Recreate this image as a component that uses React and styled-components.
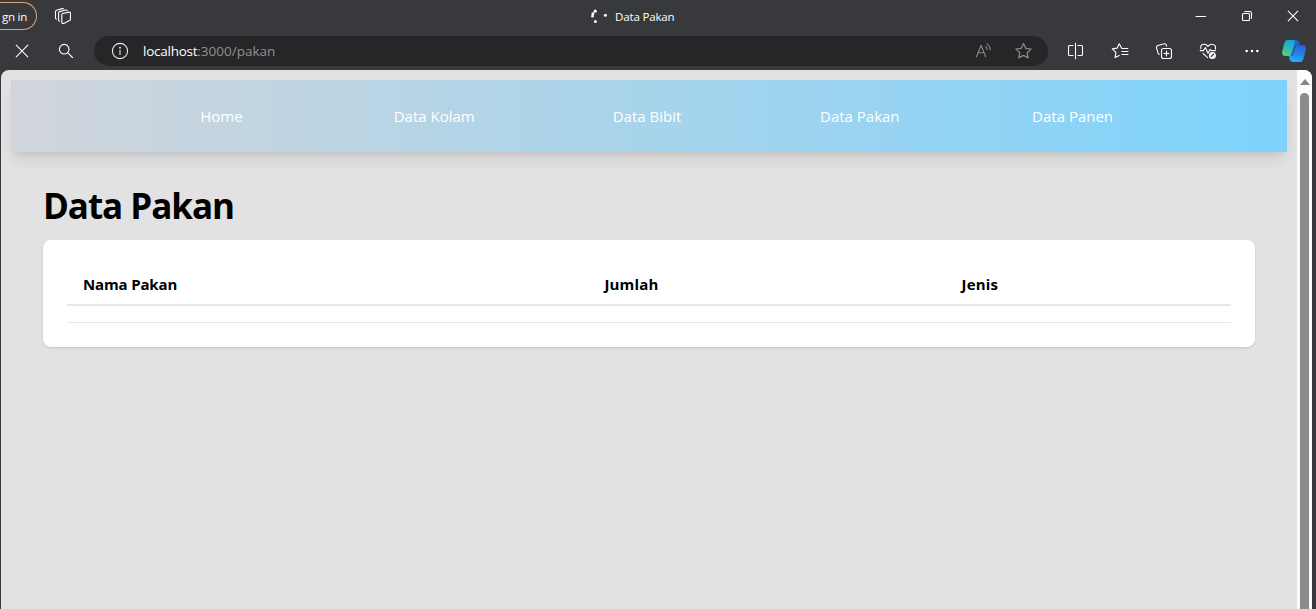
import React from 'react';
import styled, { createGlobalStyle } from 'styled-components';

const GlobalStyle = createGlobalStyle`
  * { box-sizing: border-box; }
  body { margin: 0; overflow: hidden; background: #38393d; font-family: "Open Sans", "Noto Sans", sans-serif; }
`;

const Window = styled.div`
  width: 1316px;
  height: 609px;
  overflow: hidden;
  display: flex;
  flex-direction: column;
  background: #38393d;
  color: #fff;
`;

const TitleBar = styled.header`
  height: 32px;
  display: grid;
  grid-template-columns: 590px 1fr 138px;
  align-items: center;
`;

const TitleLeft = styled.div`
  display: flex;
  align-items: center;
  gap: 17px;
`;

const SignIn = styled.div`
  width: 37px;
  height: 28px;
  padding-right: 9px;
  display: flex;
  align-items: center;
  justify-content: flex-end;
  border: 1px solid #e0a67c;
  border-left: 0;
  border-radius: 0 14px 14px 0;
  font-size: 11.5px;
  letter-spacing: -0.25px;
  white-space: nowrap;
`;

const TabTitle = styled.div`
  display: flex;
  align-items: center;
  gap: 7px;
  height: 32px;
  padding-top: 1px;
  font-size: 11.5px;
  line-height: 32px;
  letter-spacing: ${(p) => p.$tracking};
`;

const Controls = styled.div`
  display: grid;
  grid-template-columns: repeat(3, 46px);
  justify-items: center;
`;

const Toolbar = styled.div`
  height: 38px;
  display: flex;
  align-items: center;
`;

const IconCell = styled.div`
  width: ${(p) => p.$w || 44}px;
  height: 38px;
  display: flex;
  align-items: center;
  justify-content: center;
  flex: none;
`;

const AddressBar = styled.div`
  width: 954px;
  height: 30px;
  margin: 0 6px;
  padding: 0 4px 0 17px;
  display: flex;
  align-items: center;
  border-radius: 15px;
  background: #262629;
  color: #909092;
`;

const Url = styled.div`
  flex: 1;
  margin-left: 14px;
  font-size: 13.5px;
  line-height: 30px;
  letter-spacing: ${(p) => p.$tracking};
`;

const Host = styled.span`
  color: #fff;
  letter-spacing: -0.25px;
`;

const Viewport = styled.div`
  flex: 1;
  width: 1311px;
  margin-left: 1px;
  display: flex;
  overflow: hidden;
  border-radius: 8px 8px 0 0;
  background: #e2e2e2;
`;

const Page = styled.main`
  flex: 1;
  padding: 10px;
  color: #000;
`;

const Nav = styled.nav`
  height: 72px;
  padding: 0 108px 0 104px;
  display: grid;
  grid-template-columns: repeat(5, 1fr);
  align-items: center;
  justify-items: center;
  background: linear-gradient(90deg, #d1d5db, #7dd3fc);
  box-shadow: 0 10px 15px -3px rgba(0, 0, 0, 0.1), 0 4px 6px -4px rgba(0, 0, 0, 0.1);
`;

const NavLink = styled.a`
  color: #fff;
  font-size: 15px;
  line-height: 24px;
  letter-spacing: ${(p) => p.$tracking};
`;

const Section = styled.section`
  padding: 32px 32px 0;
`;

const Heading = styled.h1`
  margin: 0 0 12px;
  height: 44px;
  font-size: 35px;
  line-height: 44px;
  font-weight: 700;
  letter-spacing: ${(p) => p.$tracking};
`;

const Card = styled.div`
  height: 107px;
  padding: 24px;
  border-radius: 8px;
  background: #fff;
  box-shadow: 0 1px 3px rgba(0, 0, 0, 0.1), 0 1px 2px -1px rgba(0, 0, 0, 0.1);
`;

const Table = styled.table`
  width: 100%;
  table-layout: fixed;
  border-collapse: separate;
  border-spacing: 0;
`;

const HeadCell = styled.th`
  width: ${(p) => p.$w}px;
  height: 42px;
  padding: 0 16px;
  text-align: left;
  font-size: 15px;
  line-height: 24px;
  font-weight: 700;
  letter-spacing: ${(p) => p.$tracking};
  border-bottom: 2px solid #e5e7e9;
`;

const EmptyCell = styled.td`
  height: 17px;
  padding: 0;
  border-bottom: 1px solid #e8e8ea;
`;

const ScrollTrack = styled.div`
  width: 15px;
  padding-top: 9px;
  display: flex;
  flex-direction: column;
  align-items: center;
  gap: 8px;
  background: #fcfcfc;
`;

const ScrollArrow = styled.div`
  border: 5px solid transparent;
  border-top: 0;
  border-bottom: 6px solid #868686;
`;

const ScrollThumb = styled.div`
  width: 9px;
  flex: 1;
  border-radius: 5px 5px 0 0;
  background: #8b8b8b;
`;

const Svg = ({ w = 20, h = w, stroke = 'currentColor', sw = 1.1, children }) => (
  <svg width={w} height={h} viewBox={`0 0 ${w} ${h}`} fill="none" stroke={stroke} strokeWidth={sw} strokeLinecap="round" strokeLinejoin="round">
    {children}
  </svg>
);

const WorkspacesIcon = () => (
  <Svg w={18}>
    <path d="M8.6 6.5 15 5.1q1.4-.2 1.4 1v6.2q0 1-.9 1.3l-5.7 2.8q-2 .6-2-.9V7.6q0-.9.8-1.1Z" />
    <path d="M5.6 14.3q-1-.2-1-1.2V6q0-1.1 1-1.4l6.2-1.6q1-.2 1.4.5M2.5 12.2q-1-.2-1-1.2V4.6q0-1.1 1-1.4l5.6-1.6q1-.3 1.5.4" />
  </Svg>
);

const SpinnerIcon = () => (
  <svg width="18" height="18" viewBox="0 0 18 18" fill="#fff">
    <circle cx="5.2" cy="3.2" r="1.6" />
    <circle cx="2.9" cy="5.7" r="1.5" />
    <circle cx="2.5" cy="8.2" r="1.4" />
    <circle cx="5.4" cy="13.4" r="1.5" />
    <circle cx="15.4" cy="7.2" r="1.5" />
  </svg>
);

const StopIcon = () => <Svg w={14}><path d="M1.2 1.2l11.6 11.6M12.8 1.2 1.2 12.8" /></Svg>;
const SearchIcon = () => <Svg w={16}><circle cx="6.2" cy="6.2" r="4.8" /><path d="M9.8 9.8l4.7 4.7" /></Svg>;
const InfoIcon = () => (
  <Svg w={18} stroke="#e8e8e8"><circle cx="9" cy="9" r="7.6" /><path d="M9 8.4v4" /><circle cx="9" cy="5.7" r=".4" fill="#e8e8e8" /></Svg>
);
const ReadAloudIcon = () => (
  <Svg w={18} stroke="#8b8b8d"><path d="M1.5 14.7 6.1 3.3l4.6 11.4M3.1 10.8h6M10.7 4.4q1.4 1.2 1.3 3.3M11.9 1.9q3.4 2.2 3.2 5.8" /></Svg>
);
const StarIcon = () => (
  <Svg w={18} stroke="#8b8b8d" sw={1.2}><path d="M8.5 1.5l2.3 4.8 5.3.7-3.9 3.7 1 5.2-4.7-2.5-4.7 2.5 1-5.2L.9 7l5.3-.7Z" /></Svg>
);
const SplitIcon = () => (
  <Svg w={18} stroke="#fff"><path d="M6 3.5H2.5q-1 0-1 1v8q0 1 1 1H6M11 3.5h3.5q1 0 1 1v8q0 1-1 1H11M8.5 1.2v15.5" /></Svg>
);
const FavoritesIcon = () => (
  <Svg w={18} stroke="#fff"><path d="M10.7 6.2 8.2 1.8 6.2 6.1l-4.9.8 3.6 3.5-.8 5.2 4.1-2.2M10.9 6.5h6M10.9 9.5h6M10.9 12.5h6" /></Svg>
);
const CollectionsIcon = () => (
  <Svg w={18} stroke="#fff"><rect x="6.5" y="6.5" width="10" height="10" rx="2" /><path d="M11.5 9v5M9 11.5h5M4.4 12.3q-1.1 0-1.4-1.1L1.5 5.6Q1.1 4 2.8 3.5l6.5-1.7q1.6-.4 2 1.1l.3 1.2" /></Svg>
);
const HealthIcon = () => (
  <Svg w={18} stroke="#fff">
    <path d="M1.8 6.6C1.1 4 2.6 2.2 5 2.2c1.7 0 3 .8 4 2.2 1-1.4 2.3-2.2 4-2.2 2.6 0 4.1 2.2 3.4 5M1.2 8.6h3.2l2-3 2.6 5.6 2.2-3.8 1.2 1.2h4M4 11.3l4.6 4.4" />
    <circle cx="13.4" cy="13.4" r="3.5" fill="#fff" stroke="none" />
    <path d="M12.1 14.5 14.8 12" stroke="#38393d" />
  </Svg>
);
const MoreIcon = () => (
  <svg width="16" height="4" viewBox="0 0 16 4" fill="#fff"><circle cx="2.7" cy="2" r="1.25" /><circle cx="8" cy="2" r="1.25" /><circle cx="13.3" cy="2" r="1.25" /></svg>
);

const CopilotIcon = () => (
  <svg width="26" height="24" viewBox="0 0 26 24">
    <defs>
      <linearGradient id="cpLeft" x1="0.6" y1="0" x2="0.3" y2="1">
        <stop offset="0" stopColor="#1b9fd6" /><stop offset=".5" stopColor="#28bcb4" /><stop offset="1" stopColor="#58d070" />
      </linearGradient>
      <linearGradient id="cpRight" x1="0.6" y1="0" x2="0.3" y2="1">
        <stop offset="0" stopColor="#2a62d8" /><stop offset=".5" stopColor="#2783e8" /><stop offset="1" stopColor="#22b4f5" />
      </linearGradient>
    </defs>
    <path d="M6.6 1H14q2.2 0 1.4 2.2L12.3 14q-.9 3-3.9 3H4.5Q.1 17 1.3 12L3.4 4.1Q4.2 1 6.6 1Z" fill="url(#cpLeft)" />
    <path d="M12.5 1h2.8q2.2 0 2.9 2.3l.8 2.9h-1.9q-2.4 0-3.1 2.5L11.6 17h-2L14 3.2q.4-1.5-1.5-2.2Z" fill="#1765c6" />
    <path d="M17.5 6.3h4.2q4.2 0 3.1 4.5l-2.3 8.8Q21.6 23 18.9 23h-7.2q-2.3-.2-3-2.6L7.8 17h2.1q2 0 2.7-2.3l1.9-6.1q.7-2.3 3-2.3Z" fill="url(#cpRight)" />
  </svg>
);

const navItems = ['Home', 'Data Kolam', 'Data Bibit', 'Data Pakan', 'Data Panen'];

const columns = [
  ['Nama Pakan', 521.5, '-0.15px'],
  ['Jumlah', 357, '0.15px'],
  ['Jenis', 285.5, '0.2px'],
];

export default function App() {
  return (
    <Window>
      <GlobalStyle />
      <TitleBar>
        <TitleLeft>
          <SignIn>gn in</SignIn>
          <WorkspacesIcon />
        </TitleLeft>
        <TabTitle $tracking="-0.15px"><SpinnerIcon />Data Pakan</TabTitle>
        <Controls>
          <Svg w={12} stroke="#fff"><path d="M1 6.5h9.5" /></Svg>
          <Svg w={12} stroke="#fff"><rect x="1.5" y="3.5" width="7" height="7" rx="1" /><path d="M3.8 1.5h5q1.7 0 1.7 1.7v5" /></Svg>
          <Svg w={12} stroke="#fff"><path d="M1.2 1.2l9.6 9.6M10.8 1.2l-9.6 9.6" /></Svg>
        </Controls>
      </TitleBar>
      <Toolbar>
        <IconCell><StopIcon /></IconCell>
        <IconCell><SearchIcon /></IconCell>
        <AddressBar>
          <InfoIcon />
          <Url $tracking="0px"><Host>localhost</Host>:3000/pakan</Url>
          <IconCell $w={40}><ReadAloudIcon /></IconCell>
          <IconCell $w={40}><StarIcon /></IconCell>
        </AddressBar>
        <IconCell><SplitIcon /></IconCell>
        <IconCell><FavoritesIcon /></IconCell>
        <IconCell><CollectionsIcon /></IconCell>
        <IconCell><HealthIcon /></IconCell>
        <IconCell><MoreIcon /></IconCell>
        <IconCell $w={40}><CopilotIcon /></IconCell>
      </Toolbar>
      <Viewport>
        <Page>
          <Nav>
            {navItems.map((label) => (
              <NavLink key={label} $tracking="0px">{label}</NavLink>
            ))}
          </Nav>
          <Section>
            <Heading $tracking="-1.05px">Data Pakan</Heading>
            <Card>
              <Table>
                <thead>
                  <tr>
                    {columns.map(([label, w, tracking]) => (
                      <HeadCell key={label} $w={w} $tracking={tracking}>{label}</HeadCell>
                    ))}
                  </tr>
                </thead>
                <tbody>
                  <tr><EmptyCell colSpan={3} /></tr>
                </tbody>
              </Table>
            </Card>
          </Section>
        </Page>
        <ScrollTrack>
          <ScrollArrow />
          <ScrollThumb />
        </ScrollTrack>
      </Viewport>
    </Window>
  );
}
